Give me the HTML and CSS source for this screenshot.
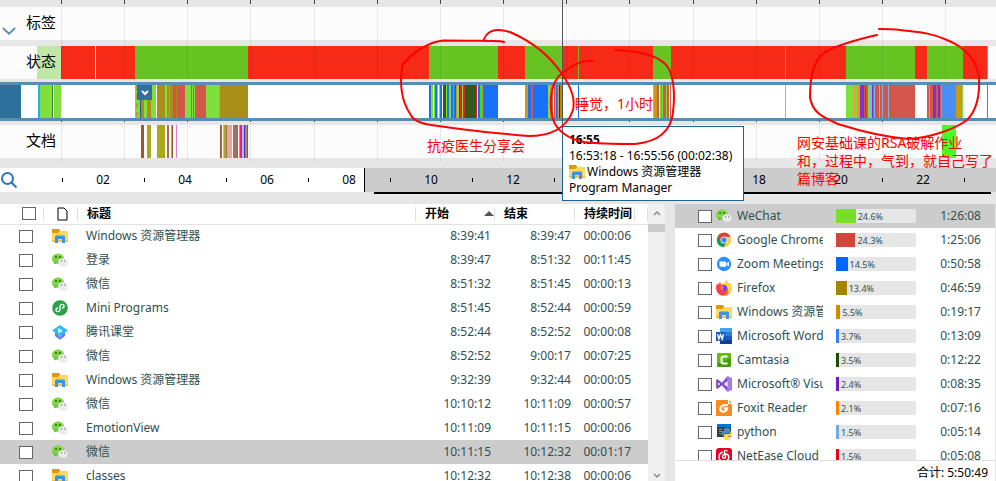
FILE: index.html
```html
<!DOCTYPE html>
<html lang="zh-CN">
<head>
<meta charset="utf-8">
<title>时间线</title>
<link rel="stylesheet" href="styles.css">
</head>
<body>
<svg class="defs" aria-hidden="true">
  <symbol id="folder" viewBox="0 0 16 16">
    <path fill="#dc9b00" d="M0 1h7l1.500 2v3H0z"/>
    <path fill="#ffd764" d="M0 5h6l2-2h8v11H0z"/>
    <path fill="#f6c342" d="M0 12h16v2H0z"/>
    <path fill="#3a96dd" d="M3 8.500 4 7.500h8l1 1V15h-3v-4H6v4H3z"/>
  </symbol>
  <symbol id="wechat" viewBox="0 0 16 16">
    <path fill="#7fd843" d="M6 1.500c3.400 0 6 2.200 6 5s-2.600 5-6 5c-.7 0-1.300 0-1.900-.2L2 12.600l.5-2.200C1 9.500 0 8.100 0 6.500c0-2.800 2.600-5 6-5z"/>
    <path fill="#58bd32" d="M0 7c.7 2 3 3 6 3v1.500c-.7 0-1.300 0-1.900-.2L2 12.600l.5-2.200C1 9.500 0 8.500 0 7z"/>
    <circle cx="4" cy="5" r="1" fill="#276b13"/><circle cx="8" cy="5" r="1" fill="#276b13"/>
    <path fill="#ececee" stroke="#d0d0d4" stroke-width=".4" d="M11 6.200c2.700 0 4.800 1.700 4.800 3.900 0 1.200-.7 2.200-1.700 2.900l.4 1.600-1.700-1c-.6.200-1.200.3-1.800.3-2.700 0-4.800-1.700-4.800-3.800s2.100-3.900 4.800-3.900z"/>
    <circle cx="9.500" cy="9" r=".7" fill="#777"/><circle cx="12.700" cy="9" r=".7" fill="#777"/>
  </symbol>
  <symbol id="mini" viewBox="0 0 16 16">
    <circle cx="8" cy="8" r="7.800" fill="#2ba245"/>
    <path fill="none" stroke="#fff" stroke-width="1.300" stroke-linecap="round" d="M5.700 8C3.500 8.300 3.200 11.400 5.500 11.600 7 11.700 8 10.800 8 9.600V6.400C8 5.200 9 4.300 10.400 4.400c2.400.2 2.200 3.300 0 3.600"/>
  </symbol>
  <symbol id="ketang" viewBox="0 0 16 16">
    <path fill="#5c7cfa" d="M3 8h10v4l-5 3.800L3 12z"/>
    <path fill="#a9bcff" d="M6 11h4l-2 2.500z"/>
    <path fill="#2cbcf8" d="M8 1l8 5.500-8 5.500-8-5.500z"/>
    <path fill="#fff" d="M6.300 4v5.400l4.200-2.700z"/>
  </symbol>
  <symbol id="chrome" viewBox="0 0 16 16">
    <circle cx="8" cy="8" r="7.200" fill="#ffcd40"/>
    <path fill="#db4437" d="M8 8 1.800 4.400A7.200 7.200 0 0 1 14.400 4.700H8z"/>
    <path fill="#0f9d58" d="M8 8 1.800 4.400A7.200 7.200 0 0 0 7.500 15.200L11 9.700z"/>
    <path fill="#db4437" d="M1.800 4.400 5 9.500 8 4.700h6.400A7.200 7.200 0 0 0 1.800 4.400z"/>
    <circle cx="8" cy="8" r="3.500" fill="#fff"/><circle cx="8" cy="8" r="2.700" fill="#4285f4"/>
  </symbol>
  <symbol id="zoom" viewBox="0 0 16 16">
    <circle cx="8" cy="8" r="7.200" fill="#2d8cff"/>
    <path fill="#fff" d="M3.500 5.500H9q1.200 0 1.200 1.200v4H5Q3.500 10.700 3.500 9.200zM10.800 7.200l2.200-1.600v5l-2.200-1.600z"/>
  </symbol>
  <symbol id="firefox" viewBox="0 0 16 16">
    <path fill="#ff8a16" d="M1 3.500 2.500 5 4 2l1.500 2.500Q8 4 9 3.500 9 1.500 10.500 0 11 2 13 3.500l1-.5q1.700 2 1.700 5.500A7.700 7.500 0 0 1 .3 8.500Q.3 5.500 1 3.500z"/>
    <path fill="#ffd83a" d="M9 4.500Q9 1.500 10.500 0 11 2 13 3.500l1-.5q1.700 2 1.700 5.500 0 4-4 6Q14 9 9 4.500z"/>
    <path fill="#f53c56" d="M.3 8.500Q.3 5.500 1 3.500L2.500 5 4 2l1 5q-1 4 3 4.500 2 .2 4-1-2 4.500-7 4.800Q.5 13 .3 8.500z"/>
    <circle cx="8.200" cy="8.300" r="3" fill="#7542e5"/>
    <path fill="#ff9a2a" d="M4.500 7 8 6.700 6.700 8.500 7.500 10 5 9.500z"/>
  </symbol>
  <symbol id="word" viewBox="0 0 16 16">
    <path fill="#41a5ee" d="M4 0h12v4H4z"/><path fill="#2b7cd3" d="M4 4h12v4H4z"/>
    <path fill="#185abd" d="M4 8h12v4H4z"/><path fill="#103f91" d="M4 12h12v4H4z"/>
    <path fill="#185abd" d="M0 4h9v9H0z"/>
    <path fill="none" stroke="#fff" stroke-width="1.300" d="m1.500 6 1.300 5L4.500 6.500 6.200 11l1.300-5"/>
  </symbol>
  <symbol id="camtasia" viewBox="0 0 16 16">
    <rect x="1" y="1" width="14" height="14" rx="1.500" fill="#469c0c"/>
    <path fill="#67b71a" d="M1 2.500Q1 1 2.500 1h11Q15 1 15 2.500V6L1 12z"/>
    <path fill="none" stroke="#fff" stroke-width="2" d="M11.500 4.500H7.500Q5.500 4.500 5.500 6.500v3q0 2 2 2h4"/>
  </symbol>
  <symbol id="vs" viewBox="0 0 16 16">
    <path fill="#a879e6" d="m11.500 0 4.500 2v12l-4.500 2z"/>
    <path fill="none" stroke="#7444b8" stroke-width="2" stroke-linejoin="round" d="M11.500 3.500 1.200 11.700V4.300L11.500 12.500"/>
    <path fill="#8b57cf" d="M11.500 0v5L8 8l3.500 3v5L6 9.500v-3z"/>
  </symbol>
  <symbol id="foxit" viewBox="0 0 16 16">
    <path fill="#f78b1f" d="M0 0h12v4h4v12H0z"/><path fill="#f9a54f" d="M13 0l3 3h-3z"/>
    <path fill="none" stroke="#fff" stroke-width="2" d="M11.800 5.200C7.500 4.300 4.300 6 4.300 9c0 3.800 6 3.700 6.700-.8H7.500"/>
  </symbol>
  <symbol id="python" viewBox="0 0 16 16">
    <path fill="#333d42" d="M1 1h14v12H1z"/><path fill="#0078d4" d="M1 0h14v3H1z"/>
    <path stroke="#52b963" d="M3 5.500h3M3 7.500h5M3 9.500h2"/>
    <path fill="#4b8bbe" d="M8 5q0-1.300 3-1.300T14 5v3q0 1.500-1.500 1.500h-3Q8 9.500 8 11v1Q5.500 12 5.500 9.500T8 7z"/>
    <path fill="#ffd94a" d="M14.500 7q1.500.5 1.500 3t-2 2.500h-2v1h2.500Q14.500 16 11 16t-3-2.500v-2Q8 10 9.500 10h3.200q1.800 0 1.800-2z"/>
  </symbol>
  <symbol id="netease" viewBox="0 0 16 16">
    <rect width="16" height="16" rx="3" fill="#e60026"/>
    <path fill="none" stroke="#fff" stroke-width="1.400" stroke-linecap="round" d="M11 2.800C9.500 1.900 8 2.700 8.400 4.200l1.100 4.300c.5 2.200-3 2.500-3 .3C6.500 5 12.800 5 12.800 9.200c0 5.700-9.800 5.600-9.800-.2C3 6.600 4.300 5 6.200 4.300"/>
  </symbol>
</svg>

<section class="timeline">
  <svg class="grid" viewBox="0 0 996 162" preserveAspectRatio="none" aria-hidden="true">
    <path class="tick" d="M61.500 0V4M124.500 0V4M187.500 0V4M250.500 0V4M314.500 0V4M377.500 0V4M440.500 0V4M503.500 0V4M566.500 0V4M629.500 0V4M693.500 0V4M756.500 0V4M819.500 0V4M882.500 0V4M945.500 0V4M61.500 121v1M124.500 121v1M187.500 121v1M250.500 121v1M314.500 121v1M377.500 121v1M440.500 121v1M503.500 121v1M629.500 121v1M693.500 121v1M756.500 121v1M819.500 121v1M882.500 121v1"/>
    <path class="line" d="M61.500 7V79M124.500 7V79M187.500 7V79M250.500 7V79M314.500 7V79M377.500 7V79M440.500 7V79M503.500 7V79M566.500 7V79M629.500 7V79M693.500 7V79M756.500 7V79M819.500 7V79M882.500 7V79M945.500 7V79M61.500 125v36M124.500 125v36M187.500 125v36M250.500 125v36M314.500 125v36M377.500 125v36M440.500 125v36M503.500 125v36M566.500 125v36M629.500 125v36M693.500 125v36M756.500 125v36M819.500 125v36M882.500 125v36M945.500 125v36"/>
  </svg>

  <div class="track tags">
    <button class="fold" aria-label="折叠"><svg viewBox="0 0 16 10"><path d="m1 1 7 6.500L15 1"/></svg></button>
    <span class="name">标签</span>
  </div>

  <div class="track status">
    <svg class="segments" viewBox="0 0 996 33" preserveAspectRatio="none">
      <rect class="pale" x="37" width="24"/>
      <rect class="off" x="61" width="34"/><rect class="off" x="96" width="892"/>
      <rect class="on" x="135" width="113"/><rect class="on" x="429" width="69"/><rect class="on" x="525" width="38"/>
      <rect class="on" x="578" width="1"/><rect class="on" x="653" width="18"/><rect class="on" x="785" width="1"/>
      <rect class="on" x="846" width="69"/><rect class="on" x="927" width="36"/><rect class="on" x="987" width="1"/>
    </svg>
    <span class="name">状态</span>
  </div>

  <div class="track apps">
    <svg class="segments" viewBox="0 0 996 33" preserveAspectRatio="none">
      <rect fill="#2d709b" width="21"/>
      <rect fill="#18b5f1" x="38" width="2"/><rect class="chat" x="40" width="12"/><rect fill="#368538" x="52" width="1"/><rect class="chat" x="54" width="7"/>
      <rect class="chat" x="135" width="21"/><path stroke="#b09a38" stroke-width="2" stroke-dasharray="5 4" d="M137 0v33"/>
      <rect fill="#23568b" x="140" width="1"/><rect class="fox" x="141" width="3"/><rect class="fox" x="147" width="4"/>
      <rect class="fox" x="157" width="8"/><rect class="chat" x="165" width="2"/><rect class="fox" x="167" width="6"/><rect class="orange" x="169" width="1"/>
      <rect class="web" x="173" width="12"/><rect class="fox" x="176" width="1"/><rect class="chat" x="185" width="10"/><rect class="web" x="191" width="1"/><rect class="web" x="193" width="1"/>
      <rect class="web" x="195" width="11"/><rect class="chat" x="206" width="13"/><rect class="orange" x="219" width="1"/><rect class="fox" x="220" width="28"/>

      <rect class="meet" x="429" width="69"/>
      <rect class="chat" x="431" width="4"/><rect fill="#fff" x="433" width="1"/><rect class="chat" x="437" width="1"/><rect fill="#fff" x="438" width="1"/><rect class="chat" x="439" width="1"/>
      <rect fill="#fff" x="442" width="1"/><rect class="cam" x="443" width="3"/><rect class="chat" x="446" width="1"/><rect class="chat" x="449" width="2"/>
      <rect class="files" x="453" width="1"/><rect class="red" x="455" width="1"/><rect class="files" x="456" width="1"/><rect class="chat" x="457" width="2"/>
      <rect class="cam" x="459" width="1"/><rect class="red" x="460" width="2"/><rect class="chat" x="462" width="1"/><rect class="red" x="463" width="2"/>
      <rect class="cam" x="465" width="11"/><rect class="red" x="476" width="1"/><rect fill="#fff" x="477" width="1"/>
      <rect fill="#18ed3a" x="480" width="1"/><rect class="files" x="481" width="2"/>

      <rect class="files" x="525" width="3"/><rect class="meet" x="528" width="20"/><rect class="web" x="531" width="2"/>
      <rect class="chat" x="548" width="2"/><rect class="files" x="550" width="2"/><rect class="web" x="552" width="1"/>
      <rect class="web" x="554" width="1"/><rect class="orange" x="555" width="1"/><rect class="meet" x="556" width="1"/><rect class="web" x="557" width="1"/><rect class="orange" x="558" width="1"/><rect fill="#332b19" x="559" width="1"/><rect class="fox" x="560" width="3"/>
      <rect class="meet" x="578" width="1"/>

      <rect class="chat" x="653" width="1"/><rect class="files" x="654" width="3"/><rect class="web" x="657" width="2"/><rect class="chat" x="660" width="1"/><rect class="fox" x="661" width="1"/><rect class="chat" x="662" width="1"/><rect class="web" x="663" width="3"/><rect class="chat" x="666" width="1"/><rect class="web" x="667" width="2"/><rect class="web" x="670" width="1"/>
      <rect class="chat" x="785" width="1"/>

      <rect class="chat" x="846" width="11"/><rect class="orange" x="854" width="1"/><rect class="orange" x="857" width="3"/><rect class="vs" x="860" width="4"/><rect class="web" x="864" width="1"/><rect class="vs" x="865" width="1"/><rect class="web" x="866" width="49"/>
      <rect class="chat" x="868" width="2"/><rect class="py" x="870" width="2"/><rect class="vs" x="872" width="1"/><rect class="py" x="874" width="1"/><rect class="py" x="879" width="1"/><rect class="py" x="882" width="1"/><rect class="py" x="888" width="1"/>
      <rect class="web" x="927" width="15"/><rect class="py" x="929" width="1"/><rect class="vs" x="933" width="3"/><rect class="vs" x="938" width="2"/><rect class="orange" x="941" width="1"/>
      <rect class="word" x="942" width="14"/><rect class="files" x="956" width="6"/><rect class="chat" x="962" width="1"/><rect class="web" x="987" width="1"/>
    </svg>
    <button class="expand" aria-label="展开"><svg viewBox="0 0 8 6"><path d="m1 1 3 3 3-3"/></svg></button>
  </div>

  <div class="track docs">
    <svg class="segments" viewBox="0 0 996 33" preserveAspectRatio="none">
      <rect fill="#a0562d" x="141" width="3"/><rect class="lime" x="147" width="4"/><rect class="lime" x="157" width="8"/><rect class="clay" x="167" width="2"/><rect fill="#d77fd8" x="171" width="1"/><rect fill="#a0562d" x="172" width="1"/><rect fill="#d77fd8" x="176" width="1"/>
      <rect fill="#a0562d" x="220" width="1"/><rect class="clay" x="221" width="1"/><rect fill="#b9c3cf" x="223" width="1"/><rect class="lime" x="224" width="2"/><rect class="clay" x="226" width="1"/><rect fill="#e4a898" x="227" width="5"/><rect class="clay" x="233" width="4"/><rect fill="#478a86" x="237" width="1"/><rect class="orange" x="239" width="1"/><rect fill="#f51a77" x="240" width="2"/><rect fill="#a9bfdc" x="242" width="2"/><rect fill="#3237df" x="244" width="1"/><rect fill="#d8763c" x="245" width="2"/><rect fill="#a0562d" x="247" width="1"/>
      <rect fill="#50fa28" x="942" width="14"/>
    </svg>
    <span class="name">文档</span>
  </div>

  <div class="scale">
    <button class="search" aria-label="搜索"><svg viewBox="0 0 18 18"><circle cx="7.500" cy="7.500" r="5.500"/><path d="m11.500 11.500 5 5"/></svg></button>
    <span>02</span><span>04</span><span>06</span><span>08</span><span>10</span><span>12</span><span></span><span></span><span>18</span><span>20</span><span>22</span><span></span>
  </div>
  <div class="range"></div>

  <div class="cursor"></div>
  <div class="tooltip" role="tooltip">
    <b>16:55</b>
    <span>16:53:18 - 16:55:56 (00:02:38)</span>
    <span class="app"><svg class="icon"><use href="#folder"/></svg>Windows 资源管理器</span>
    <span>Program Manager</span>
  </div>

  <svg class="ink" viewBox="0 0 996 204" preserveAspectRatio="none" aria-hidden="true">
    <path d="M504 42C500 40 493 41 443 40.500 428 42 413 53 403 64 401 70 401 78 401 83 402 100 406 108 412 117 420 126 436 125 453 128 480 132 507 134 528 136 550 136 567 128 573 110 575 100 573 90 562 74 550 56 533 42 510 32 497 28 488 29 484 39"/>
    <path d="M593 61C583 60 570 66 558 77 550 88 549 105 553 119 556 130 568 139 584 142 600 144 620 144 635 144 655 142 671 133 673 112 675 95 674 80 669 69 662 56 640 51 615 50"/>
    <path d="M877 35C855 40 838 45 825 52 811 61 810 85 810 97 812 112 822 117 838 124 860 131 885 137 908 139 930 138 955 129 967 120 977 110 980 95 979 77 977 62 967 48 947 40 930 32 915 32 900 30 893 29 886 29 879 29"/>
  </svg>
  <p class="note talk">抗疫医生分享会</p>
  <p class="note sleep">睡觉，1小时</p>
  <p class="note blog">网安基础课的RSA破解作业<br>和，过程中，气到，就自己写了<br>篇博客</p>
</section>

<main class="panels">
  <section class="events">
    <table>
      <colgroup><col class="c-check"><col class="c-icon"><col><col class="c-start"><col class="c-end"><col class="c-length"><col class="c-rest"></colgroup>
      <thead><tr>
        <th><input type="checkbox" aria-label="全选"></th>
        <th><svg class="page" viewBox="0 0 11 14" role="img" aria-label="图标"><path d="M1 1h6l3 3v9H1z"/></svg></th>
        <th>标题</th><th class="sorted">开始</th><th>结束</th><th>持续时间</th><th></th>
      </tr></thead>
      <tbody>
        <tr><td><input type="checkbox" aria-label="Windows 资源管理器"></td><td><svg class="icon"><use href="#folder"/></svg></td><td>Windows 资源管理器</td><td>8:39:41</td><td>8:39:47</td><td>00:00:06</td><td></td></tr>
        <tr><td><input type="checkbox" aria-label="登录"></td><td><svg class="icon"><use href="#wechat"/></svg></td><td>登录</td><td>8:39:47</td><td>8:51:32</td><td>00:11:45</td><td></td></tr>
        <tr><td><input type="checkbox" aria-label="微信"></td><td><svg class="icon"><use href="#wechat"/></svg></td><td>微信</td><td>8:51:32</td><td>8:51:45</td><td>00:00:13</td><td></td></tr>
        <tr><td><input type="checkbox" aria-label="Mini Programs"></td><td><svg class="icon"><use href="#mini"/></svg></td><td>Mini Programs</td><td>8:51:45</td><td>8:52:44</td><td>00:00:59</td><td></td></tr>
        <tr><td><input type="checkbox" aria-label="腾讯课堂"></td><td><svg class="icon"><use href="#ketang"/></svg></td><td>腾讯课堂</td><td>8:52:44</td><td>8:52:52</td><td>00:00:08</td><td></td></tr>
        <tr><td><input type="checkbox" aria-label="微信"></td><td><svg class="icon"><use href="#wechat"/></svg></td><td>微信</td><td>8:52:52</td><td>9:00:17</td><td>00:07:25</td><td></td></tr>
        <tr><td><input type="checkbox" aria-label="Windows 资源管理器"></td><td><svg class="icon"><use href="#folder"/></svg></td><td>Windows 资源管理器</td><td>9:32:39</td><td>9:32:44</td><td>00:00:05</td><td></td></tr>
        <tr><td><input type="checkbox" aria-label="微信"></td><td><svg class="icon"><use href="#wechat"/></svg></td><td>微信</td><td>10:10:12</td><td>10:11:09</td><td>00:00:57</td><td></td></tr>
        <tr><td><input type="checkbox" aria-label="EmotionView"></td><td><svg class="icon"><use href="#wechat"/></svg></td><td>EmotionView</td><td>10:11:09</td><td>10:11:15</td><td>00:00:06</td><td></td></tr>
        <tr class="selected"><td><input type="checkbox" aria-label="微信"></td><td><svg class="icon"><use href="#wechat"/></svg></td><td>微信</td><td>10:11:15</td><td>10:12:32</td><td>00:01:17</td><td></td></tr>
        <tr><td><input type="checkbox" aria-label="classes"></td><td><svg class="icon"><use href="#folder"/></svg></td><td>classes</td><td>10:12:32</td><td>10:12:38</td><td>00:00:06</td><td></td></tr>
      </tbody>
    </table>
    <div class="scrollbar">
      <svg viewBox="0 0 8 6"><path d="m1 5 3-3 3 3"/></svg>
      <div class="thumb"></div>
      <svg viewBox="0 0 8 6"><path d="m1 1 3 3 3-3"/></svg>
    </div>
  </section>

  <section class="usage">
    <div class="list">
      <table>
        <colgroup><col class="u-check"><col class="u-icon"><col class="u-name"><col class="u-bar"><col></colgroup>
        <tbody>
          <tr class="selected"><td><input type="checkbox" aria-label="WeChat"></td><td><svg class="icon"><use href="#wechat"/></svg></td><td><div class="clip">WeChat</div></td><td><div class="bar"><i class="b-chat" style="width:24.6%"></i>24.6%</div></td><td>1:26:08</td></tr>
          <tr><td><input type="checkbox" aria-label="Google Chrome"></td><td><svg class="icon"><use href="#chrome"/></svg></td><td><div class="clip">Google Chrome</div></td><td><div class="bar"><i class="b-web" style="width:24.3%"></i>24.3%</div></td><td>1:25:06</td></tr>
          <tr><td><input type="checkbox" aria-label="Zoom Meetings"></td><td><svg class="icon"><use href="#zoom"/></svg></td><td><div class="clip">Zoom Meetings</div></td><td><div class="bar"><i class="b-meet" style="width:14.5%"></i>14.5%</div></td><td>0:50:58</td></tr>
          <tr><td><input type="checkbox" aria-label="Firefox"></td><td><svg class="icon"><use href="#firefox"/></svg></td><td><div class="clip">Firefox</div></td><td><div class="bar"><i class="b-fox" style="width:13.4%"></i>13.4%</div></td><td>0:46:59</td></tr>
          <tr><td><input type="checkbox" aria-label="Windows 资源管理器"></td><td><svg class="icon"><use href="#folder"/></svg></td><td><div class="clip">Windows 资源管理器</div></td><td><div class="bar"><i class="b-files" style="width:5.5%"></i>5.5%</div></td><td>0:19:17</td></tr>
          <tr><td><input type="checkbox" aria-label="Microsoft Word"></td><td><svg class="icon"><use href="#word"/></svg></td><td><div class="clip">Microsoft Word</div></td><td><div class="bar"><i class="b-word" style="width:3.7%"></i>3.7%</div></td><td>0:13:09</td></tr>
          <tr><td><input type="checkbox" aria-label="Camtasia"></td><td><svg class="icon"><use href="#camtasia"/></svg></td><td><div class="clip">Camtasia</div></td><td><div class="bar"><i class="b-cam" style="width:3.5%"></i>3.5%</div></td><td>0:12:22</td></tr>
          <tr><td><input type="checkbox" aria-label="Microsoft® Visual Studio"></td><td><svg class="icon"><use href="#vs"/></svg></td><td><div class="clip">Microsoft® Visual</div></td><td><div class="bar"><i class="b-vs" style="width:2.4%"></i>2.4%</div></td><td>0:08:35</td></tr>
          <tr><td><input type="checkbox" aria-label="Foxit Reader"></td><td><svg class="icon"><use href="#foxit"/></svg></td><td><div class="clip">Foxit Reader</div></td><td><div class="bar"><i class="b-foxit" style="width:2.1%"></i>2.1%</div></td><td>0:07:16</td></tr>
          <tr><td><input type="checkbox" aria-label="python"></td><td><svg class="icon"><use href="#python"/></svg></td><td><div class="clip">python</div></td><td><div class="bar"><i class="b-py" style="width:1.5%"></i>1.5%</div></td><td>0:05:14</td></tr>
          <tr><td><input type="checkbox" aria-label="NetEase Cloud Music"></td><td><svg class="icon"><use href="#netease"/></svg></td><td><div class="clip">NetEase Cloud</div></td><td><div class="bar"><i class="b-music" style="width:1.5%"></i>1.5%</div></td><td>0:05:08</td></tr>
        </tbody>
      </table>
    </div>
    <footer>合计: 5:50:49</footer>
  </section>
</main>
</body>
</html>
```
FILE: styles.css
```css
* { box-sizing: border-box; }

body {
  margin: 0;
  height: 100vh;
  display: flex;
  flex-direction: column;
  overflow: hidden;
  background: #e6e6e6;
  color: #000;
  font: 12px/16px "Noto Sans", "Noto Sans CJK SC", sans-serif;
}

.defs { position: absolute; width: 0; height: 0; }
.icon { display: block; width: 16px; height: 16px; }

button { padding: 0; border: 0; background: none; }

input[type="checkbox"] {
  appearance: none;
  display: block;
  width: 14px;
  height: 13px;
  margin: 0;
  border: 1px solid #666;
  background: #fff;
}

/* Timeline */
.timeline { position: relative; flex: none; padding: 7px 0 10px; }

.grid { position: absolute; top: 0; left: 0; z-index: 1; width: 100%; height: 162px; pointer-events: none; shape-rendering: crispEdges; }
.grid path { fill: none; stroke-width: 1; }
.grid .tick { stroke: #444; }
.grid .line { stroke: rgba(0, 0, 0, 0.08); }

.track { position: relative; display: flex; align-items: center; height: 33px; background: #fcfcfc; }
.name { position: relative; z-index: 2; padding: 0 0 3px 26px; font-size: 15px; line-height: 20px; }
.tags .name { padding-left: 10px; }
.status { margin-top: 6px; }
.apps { height: 39px; margin-top: 3px; border: solid #578db2; border-width: 3px 0; background: #fff; }
.docs { margin-top: 4px; }

.segments { position: absolute; inset: 0; width: 100%; height: 100%; shape-rendering: crispEdges; }
.segments rect { height: 33px; }
.pale { fill: #c1e7a7; }
.off { fill: #f72a17; }
.on { fill: #66c322; }
.chat { fill: #80df3c; }
.fox { fill: #a98f17; }
.web { fill: #d3564b; }
.orange { fill: #f0902a; }
.meet { fill: #1871fa; }
.cam { fill: #315b1a; }
.red { fill: #e81c31; }
.files { fill: #ca9a17; }
.vs { fill: #7e33c3; }
.py { fill: #7eb6e6; }
.word { fill: #488ef5; }
.lime { fill: #a9a91a; }
.clay { fill: #a4705c; }

.fold { width: 16px; height: 10px; padding-left: 2px; margin-top: 16px; }
.fold svg { display: block; width: 14px; height: 9px; }
.fold path, .expand path { fill: none; stroke: #578db2; stroke-width: 2; }
.expand { position: absolute; left: 137px; top: 0; width: 15px; height: 15px; background: #2d709b; display: grid; place-items: center; }
.expand svg { width: 8px; height: 6px; }
.expand path { stroke: #fff; }

.scale {
  display: grid;
  grid-template-columns: 62fr repeat(11, 82fr) 32fr;
  align-items: center;
  height: 24px;
  margin-top: 10px;
  background: linear-gradient(90deg, #fff 364px, #000 364px 365px, #ccc 365px);
  text-align: center;
}
.scale span { position: relative; height: 16px; }
.scale span::before { content: ""; position: absolute; left: 0; top: 6px; width: 1px; height: 4px; background: #000; }
.search svg { display: block; width: 18px; height: 18px; }
.search svg * { fill: none; stroke: #2d74b5; stroke-width: 2; }
.range { height: 2px; margin: 0 5px 0 374px; background: #000; }

.cursor { position: absolute; left: 562px; top: 0; z-index: 3; width: 1px; height: 126px; background: #555; }
.tooltip {
  position: absolute;
  left: 562px;
  top: 126px;
  z-index: 4;
  display: flex;
  flex-direction: column;
  padding: 4px 6px;
  width: 182px;
  border: 1px solid #1e6391;
  background: #fff;
  white-space: nowrap;
}
.tooltip b { line-height: 17px; }
.tooltip .app { display: flex; gap: 2px; }

.ink { position: absolute; top: 0; left: 0; z-index: 5; width: 100%; height: 204px; pointer-events: none; }
.ink path { fill: none; stroke: #f00; stroke-width: 2; stroke-linecap: round; }
.note { position: absolute; z-index: 6; margin: 0; color: #f00; font-size: 14px; line-height: 18px; white-space: nowrap; }
.talk { left: 427px; top: 137px; }
.sleep { left: 575px; top: 95px; }
.blog { left: 797px; top: 134px; }

/* Panels */
.panels { flex: 1; min-height: 0; display: flex; gap: 10px; color: #2f4f4f; }
table { width: 100%; border-collapse: collapse; table-layout: fixed; }
td, th { height: 24px; padding: 0; white-space: nowrap; }
.selected { background: #ccc; }

.events { flex: 1; min-width: 0; display: flex; align-items: flex-start; overflow: hidden; background: #fff; }
.c-check { width: 44px; }
.c-icon { width: 34px; }
.c-start { width: 79px; }
.c-end { width: 80px; }
.c-length { width: 60px; }
.c-rest { width: 13px; }
.events th {
  height: 20px;
  padding-left: 9px;
  border-bottom: 1px solid #e3e3e3;
  background: linear-gradient(#e0e0e0, #e0e0e0) right 3px / 1px 14px no-repeat;
  color: #000;
  text-align: left;
}
.events th:first-child { padding-left: 22px; }
.events th:nth-child(2) { padding-left: 13px; }
.events td { text-align: right; padding-right: 4px; }
.events td:first-child { padding-left: 19px; }
.events td:nth-child(2) { padding-left: 8px; }
.events td:nth-child(3) { padding-left: 8px; text-align: left; }
.page { display: block; width: 11px; height: 14px; }
.page path { fill: none; stroke: #000; }
.sorted { position: relative; }
.sorted::after {
  content: "";
  position: absolute;
  right: 1px;
  top: 7px;
  border: solid transparent;
  border-width: 0 5px 5px;
  border-bottom-color: #555;
}

.scrollbar { flex: none; align-self: stretch; display: flex; flex-direction: column; align-items: center; width: 17px; padding: 6px 0 2px; background: #f0f0f0; }
.scrollbar svg { width: 8px; height: 6px; }
.scrollbar path { fill: none; stroke: #888; stroke-width: 1.5; }
.thumb { width: 100%; height: 8px; margin: 8px 0 auto; background: #ccc; }

.usage { flex: none; width: 321px; display: flex; flex-direction: column; border-right: 1px solid #e6e6e6; background: #fff; }
.list { flex: 1; min-height: 0; overflow: hidden; }
.u-check { width: 41px; }
.u-icon { width: 21px; }
.u-name { width: 99px; }
.u-bar { width: 80px; }
.usage td:first-child { padding-left: 23px; }
.usage td:last-child { padding-right: 14px; text-align: right; }
.clip { width: 86px; overflow: hidden; }
.bar { display: flex; gap: 2px; height: 14px; background: #e6e6e6; font-size: 9px; line-height: 15px; }
.bar i { flex: none; min-width: 3px; }
.b-chat { background: #77de2a; }
.b-web { background: #d0463b; }
.b-meet { background: #0066ff; }
.b-fox { background: #a28600; }
.b-files { background: #c79100; }
.b-word { background: #3380f5; }
.b-cam { background: #1d4b04; }
.b-vs { background: #6f1ebd; }
.b-foxit { background: #ff8200; }
.b-py { background: #70ade2; }
.b-music { background: #ec0022; }

.usage footer { flex: none; height: 21px; padding: 4px 7px 0 0; border-top: 1px solid #ddd; color: #000; text-align: right; }
```
